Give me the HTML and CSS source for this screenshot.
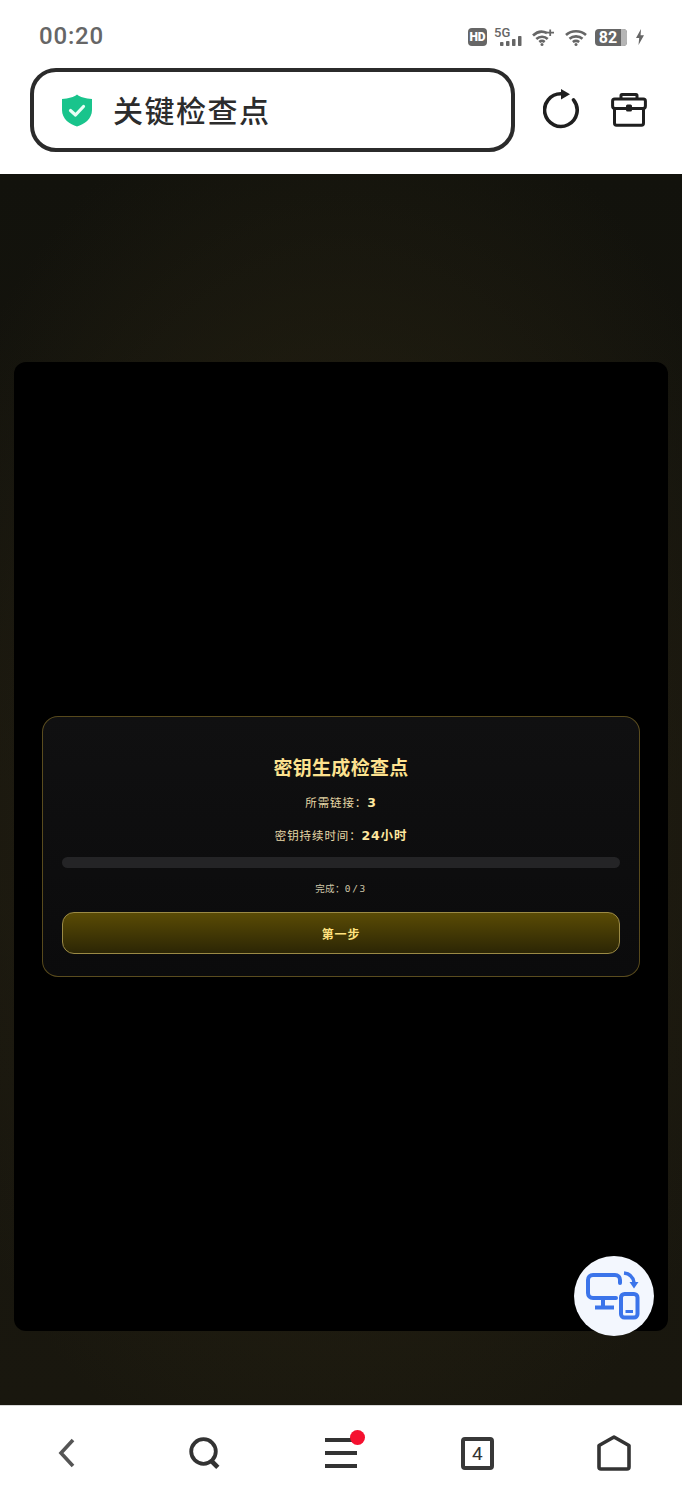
FILE: index.html
```html
<!DOCTYPE html>
<html lang="zh">
<head>
<meta charset="utf-8">
<title>关键检查点</title>
<link rel="stylesheet" href="styles.css">
</head>
<body>
<div class="phone">
  <header class="chrome">
    <div class="status">
      <span class="time">00:20</span>
      <div class="status-icons">
        <span class="hd">HD</span>
        <span class="net">
          <span class="net-label">5G</span>
          <svg class="net-bars" width="22" height="10" viewBox="0 0 22 10"><rect x="0" y="6" width="3.500" height="4" rx="0.800"/><rect x="6" y="5" width="3.500" height="5" rx="0.800"/><rect x="12" y="3" width="3.500" height="7" rx="0.800"/><rect x="18" y="0" width="3.500" height="10" rx="0.800"/></svg>
        </span>
        <svg class="wifi-plus" width="22" height="17" viewBox="0 0 22 17" fill="none" stroke="#666" stroke-width="2.600"><path d="M1 6.500C5 2.600 10.500 1.800 15 4"/><path d="M4.300 10C7.500 7.200 12.500 7 15.700 10"/><path d="M7.300 13C9 11.600 11 11.600 12.700 13"/><circle cx="10" cy="15.500" r="1.500" fill="#666" stroke="none"/><path d="M18.200 0.500V7M15 3.700H22" stroke-width="1.800"/></svg>
        <svg class="wifi" width="22" height="17" viewBox="0 0 22 17" fill="none" stroke="#666" stroke-width="2.600"><path d="M1 6C6.500 1 15.500 1 21 6"/><path d="M4.500 9.700C8 6.600 14 6.600 17.500 9.700"/><path d="M7.800 13C10 11.400 12 11.400 14.200 13"/><circle cx="11" cy="15.500" r="1.500" fill="#666" stroke="none"/></svg>
        <span class="battery"><span class="battery-level">82</span><span class="battery-rest"></span></span>
        <svg class="bolt" width="8" height="16" viewBox="0 0 8 16"><path d="M5 0L0 9H3.200L2.500 16L8 6.300H4.600Z" fill="#666"/></svg>
      </div>
    </div>
    <div class="toolbar">
      <div class="address">
        <svg class="shield" width="32" height="33" viewBox="0 0 32 33"><path d="M16 0.500C19 3 24.500 4.500 31 5V16C31 25 23 30.500 16 32.500C9 30.500 1 25 1 16V5C7.500 4.500 13 3 16 0.500Z" fill="#19c48c"/><path d="M9.500 16.500L14.500 21L22.500 12.500" fill="none" stroke="#e8fff6" stroke-width="3.200" stroke-linecap="round" stroke-linejoin="round"/></svg>
        <span class="address-text">关键检查点</span>
      </div>
      <svg class="tool reload" width="38" height="40" viewBox="0 0 38 40" fill="none" stroke="#1f1f1f" stroke-width="3.600" stroke-linecap="round"><path d="M30.500 10.800A16.300 16.300 0 1 1 18 4.800"/><path d="M18 0L27 5.300L18 10.500Z" fill="#1f1f1f" stroke="none"/></svg>
      <svg class="tool box" width="36" height="34" viewBox="0 0 36 34" fill="none" stroke="#1f1f1f" stroke-width="3" stroke-linejoin="round"><path d="M10 6V2.500C10 2 10.500 1.500 11 1.500H25C25.500 1.500 26 2 26 2.500V6"/><path d="M4 15.500C2.500 15.500 1.600 14.500 1.600 13V8C1.600 6.800 2.500 6 3.600 6H32.400C33.500 6 34.400 6.800 34.400 8V13C34.400 14.500 33.500 15.500 32 15.500H4Z"/><path d="M3.500 15V30C3.500 31.300 4.300 32.300 5.500 32.300H30.500C31.700 32.300 32.500 31.300 32.500 30V15"/><rect x="15" y="11.500" width="6" height="7" rx="1.500" fill="#1f1f1f" stroke="none"/></svg>
    </div>
  </header>

  <main class="stage">
    <section class="panel">
      <div class="card">
        <h1 class="card-title">密钥生成检查点</h1>
        <p class="card-line">所需链接：<strong class="card-value">3</strong></p>
        <p class="card-line">密钥持续时间：<strong class="card-value">24小时</strong></p>
        <div class="progress"></div>
        <p class="card-count">完成：<span class="count-value">0/3</span></p>
        <button class="card-button" type="button">第一步</button>
      </div>
    </section>
    <div class="fab">
      <svg width="56" height="52" viewBox="0 0 56 52" fill="none" stroke="#3b74ea" stroke-width="4" stroke-linecap="round" stroke-linejoin="round"><path d="M34 13V10C34 7 32 5 29 5H7C4 5 2 7 2 10V23C2 26 4 28 7 28H30"/><path d="M17 29V36" stroke-linecap="butt"/><path d="M9 37.500H28" stroke-linecap="butt"/><path d="M38 3C43 3.500 47 6.500 48 12.500" stroke-width="3.400" stroke-linecap="butt"/><path d="M43.500 12H52.500L48 18.500Z" fill="#3b74ea" stroke="none"/><rect x="35" y="24" width="16.500" height="23.500" rx="3.500"/><path d="M39.500 41.500H47" stroke-linecap="butt" stroke-width="3"/></svg>
    </div>
  </main>

  <nav class="bottom-nav">
    <svg class="nav-icon back" width="20" height="30" viewBox="0 0 20 30" fill="none" stroke="#555" stroke-width="3.600"><path d="M15 2L3 15L15 28"/></svg>
    <svg class="nav-icon" width="32" height="32" viewBox="0 0 32 32" fill="none" stroke="#333" stroke-width="3.800"><circle cx="14.500" cy="14.500" r="12.300"/><path d="M22 23.500L28.800 30.300" stroke-width="4.600"/></svg>
    <span class="menu">
      <span class="menu-line"></span>
      <span class="menu-line"></span>
      <span class="menu-line"></span>
      <span class="menu-dot"></span>
    </span>
    <span class="tabs">4</span>
    <svg class="nav-icon" width="34" height="36" viewBox="0 0 34 36" fill="none" stroke="#333" stroke-width="3.600" stroke-linejoin="round"><path d="M17 2L32 10.500V32C32 33.200 31.500 34 30 34H4C2.500 34 2 33.200 2 32V10.500Z"/></svg>
  </nav>
</div>
</body>
</html>
```

FILE: styles.css
```css
* { box-sizing: border-box; }

html, body {
  margin: 0;
  padding: 0;
  background: #fff;
}

.phone {
  width: 682px;
  height: 1500px;
  display: flex;
  flex-direction: column;
  font-family: "Noto Sans CJK SC", "Noto Sans", sans-serif;
}

.chrome {
  height: 174px;
  background: #fff;
  flex: none;
}

.status {
  height: 68px;
  padding: 21px 38px 0 39px;
  display: flex;
  justify-content: space-between;
  align-items: flex-start;
}

.time {
  font: 500 24px/30px Roboto, sans-serif;
  letter-spacing: 0.800px;
  color: #666;
}

.status-icons {
  display: flex;
  align-items: center;
  height: 32px;
}

.hd {
  width: 19px;
  height: 18px;
  border-radius: 4px;
  background: #666;
  color: #fff;
  font: 900 12px/18px Roboto, sans-serif;
  text-align: center;
}

.net {
  width: 28px;
  height: 18px;
  margin-left: 7px;
  display: flex;
  flex-direction: column;
  align-items: flex-start;
}

.net-label {
  height: 8px;
  font: 500 13px/10px Roboto, sans-serif;
  color: #666;
}

.net-bars {
  margin-left: 6px;
  fill: #666;
}

.wifi-plus {
  margin-left: 10px;
}

.wifi {
  margin-left: 11px;
}

.battery {
  width: 32px;
  height: 17px;
  margin-left: 8px;
  border-radius: 4px;
  background: #666;
  display: flex;
  overflow: hidden;
}

.battery-level {
  width: 26px;
  color: #fff;
  font: 700 16px/17px Roboto, sans-serif;
  text-align: center;
}

.battery-rest {
  flex: 1;
  background: #b5b5b5;
}

.bolt {
  margin-left: 9px;
}

.toolbar {
  display: flex;
  align-items: center;
  padding-left: 30px;
}

.address {
  width: 485px;
  height: 84px;
  border: 4px solid #2b2b2b;
  border-radius: 26px;
  display: flex;
  align-items: center;
  padding-left: 27px;
  gap: 20px;
}

.address-text {
  font-size: 30px;
  font-weight: 500;
  line-height: 40px;
  letter-spacing: 1.500px;
  color: #2c2c2c;
  margin-bottom: 2px;
}

.tool {
  flex: none;
}

.reload {
  margin-left: 28px;
  margin-bottom: 2px;
}

.box {
  margin-left: 30px;
}

.stage {
  position: relative;
  flex: 1;
  padding: 188px 14px 74px;
  background:
    radial-gradient(ellipse 460px 720px at 50% 50%, #2a2513 0%, rgba(42, 37, 19, 0) 100%),
    linear-gradient(#12120c, #17150e 50%, #19170e);
  display: flex;
}

.panel {
  flex: 1;
  background: #000;
  border-radius: 12px;
  display: flex;
  align-items: center;
  padding: 0 28px 2px;
}

.card {
  width: 100%;
  height: 261px;
  margin-top: 2px;
  padding: 35px 19px 0;
  border: 1px solid rgba(212, 175, 55, 0.38);
  border-radius: 16px;
  background: linear-gradient(#101011, #0b0b0c);
  text-align: center;
  color: #e9d9a4;
}

.card-title {
  margin: 0 0 8px;
  font-size: 19px;
  line-height: 30px;
  font-weight: 700;
  letter-spacing: 0.300px;
  color: #fde28f;
}

.card-line {
  margin: 0 0 8px;
  font-size: 11.500px;
  line-height: 24px;
  letter-spacing: 0.900px;
  color: #e6d7a6;
}

.card-value {
  font-family: "DejaVu Sans", "Noto Sans CJK SC", sans-serif;
  font-size: 12.500px;
  font-weight: 700;
  letter-spacing: 0.800px;
  color: #fde79f;
}

.progress {
  height: 11px;
  margin-top: 9px;
  border-radius: 6px;
  background: #242426;
}

.card-count {
  margin: 12px 0 0;
  font-size: 9.500px;
  line-height: 16px;
  letter-spacing: 0.400px;
  color: #cfc6a8;
}

.count-value {
  font-family: "DejaVu Sans Mono", monospace;
  letter-spacing: 1.600px;
}

.card-button {
  display: block;
  width: 100%;
  height: 42px;
  margin-top: 15px;
  border: 1px solid #9b8a45;
  border-radius: 12px;
  background: linear-gradient(#5a4b05, #2c2605);
  font-family: "Noto Sans CJK SC", sans-serif;
  font-size: 12px;
  font-weight: 700;
  letter-spacing: 0.800px;
  color: #ffe27e;
}

.fab {
  position: absolute;
  left: 574px;
  top: 1082px;
  width: 80px;
  height: 80px;
  border-radius: 50%;
  background: #f3f7fe;
  display: flex;
  align-items: center;
  justify-content: center;
}

.bottom-nav {
  height: 95px;
  flex: none;
  background: #fff;
  border-top: 1px solid #d8d8d8;
  display: grid;
  grid-template-columns: repeat(5, 1fr);
  align-items: center;
  justify-items: center;
}

.nav-icon {
  display: block;
}

.menu {
  position: relative;
  width: 32px;
  height: 30px;
  display: flex;
  flex-direction: column;
  justify-content: space-between;
}

.menu-line {
  height: 4px;
  background: #333;
}

.menu-dot {
  position: absolute;
  top: -8px;
  right: -8px;
  width: 15px;
  height: 15px;
  border-radius: 50%;
  background: #f5102f;
}

.tabs {
  width: 33px;
  height: 33px;
  border: 4px solid #383838;
  border-radius: 4px;
  font: 400 19px/25px Roboto, sans-serif;
  text-align: center;
  color: #333;
}
```
